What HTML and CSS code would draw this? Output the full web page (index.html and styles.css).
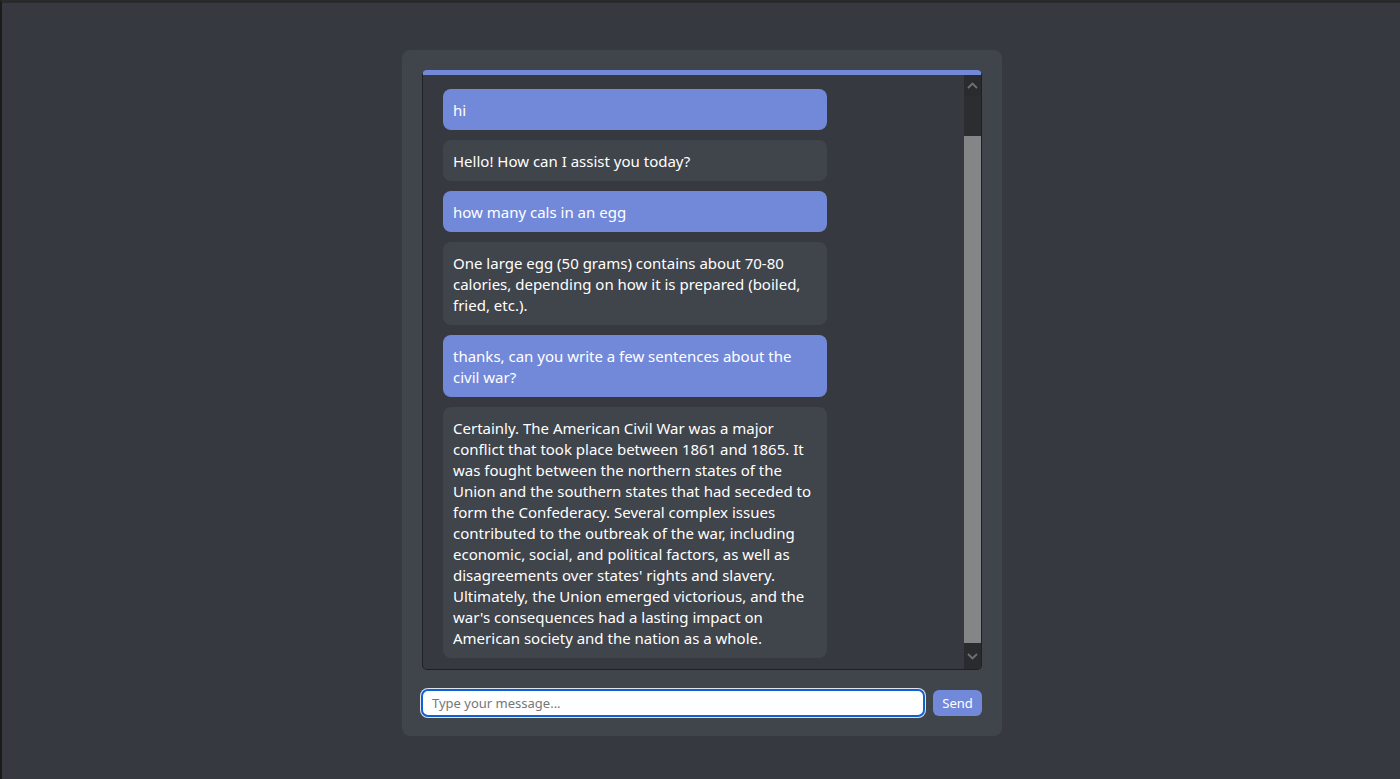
FILE: index.html
```html
<!DOCTYPE html>
<html lang="en">
<head>
<meta charset="utf-8">
<title>Chat</title>
<link rel="stylesheet" href="styles.css">
</head>
<body>
<div class="app">
  <div class="chat-box">
    <div class="messages">
      <div class="msg user">hi</div>
      <div class="msg bot">Hello! How can I assist you today?</div>
      <div class="msg user">how many cals in an egg</div>
      <div class="msg bot">One large egg (50 grams) contains about 70-80 calories, depending on how it is prepared (boiled, fried, etc.).</div>
      <div class="msg user">thanks, can you write a few sentences about the civil war?</div>
      <div class="msg bot">Certainly. The American Civil War was a major conflict that took place between 1861 and 1865. It was fought between the northern states of the Union and the southern states that had seceded to form the Confederacy. Several complex issues contributed to the outbreak of the war, including economic, social, and political factors, as well as disagreements over states' rights and slavery. Ultimately, the Union emerged victorious, and the war's consequences had a lasting impact on American society and the nation as a whole.</div>
    </div>
    <div class="scrollbar">
      <div class="sb-btn">
        <svg width="11" height="7" viewBox="0 0 11 7"><path d="M1 6 L5.5 1.5 L10 6" fill="none" stroke="#6f7073" stroke-width="1.8"/></svg>
      </div>
      <div class="sb-track-top"></div>
      <div class="sb-thumb"></div>
      <div class="sb-btn">
        <svg width="11" height="7" viewBox="0 0 11 7"><path d="M1 1 L5.5 5.5 L10 1" fill="none" stroke="#6f7073" stroke-width="1.8"/></svg>
      </div>
    </div>
  </div>
  <div class="input-row">
    <input class="msg-input" type="text" placeholder="Type your message...">
    <button class="send-btn">Send</button>
  </div>
</div>
</body>
</html>
```

FILE: styles.css
```css
html, body {
  margin: 0;
  padding: 0;
}
body {
  background: #36393f;
  height: 779px;
  box-sizing: border-box;
  border-top: 3px solid #292a2c;
  border-left: 2px solid #1b1b1c;
  padding-left: 2px;
  font-family: "Noto Sans", "Open Sans", sans-serif;
  overflow: hidden;
}
.app {
  width: 600px;
  margin: 47px auto 0;
  background: #40444b;
  border-radius: 8px;
  padding: 20px 20px 19px;
  box-sizing: border-box;
  display: flex;
  flex-direction: column;
  gap: 19px;
}
.chat-box {
  height: 600px;
  box-sizing: border-box;
  background: #36393f;
  border: 1px solid #1f2023;
  border-top: 5px solid #7289da;
  border-radius: 5px;
  display: flex;
  overflow: hidden;
}
.messages {
  flex: 1;
  padding: 14px 20px 0;
  display: flex;
  flex-direction: column;
  gap: 10px;
  overflow: hidden;
}
.msg {
  width: 384px;
  box-sizing: border-box;
  padding: 11px 10px 9px;
  border-radius: 8px;
  color: #ffffff;
  font-size: 15px;
  line-height: 21px;
}
.msg.user {
  background: #7289da;
}
.msg.bot {
  background: #40444b;
}
.scrollbar {
  width: 17px;
  flex: none;
  display: flex;
  flex-direction: column;
  background: #2c2d31;
}
.sb-btn {
  height: 21px;
  flex: none;
  display: flex;
  align-items: center;
  justify-content: center;
  background: #2a2b2e;
}
.sb-btn:last-child {
  height: 26px;
}
.sb-track-top {
  height: 40px;
  flex: none;
}
.sb-thumb {
  flex: 1;
  background: #848587;
}
.input-row {
  display: flex;
  align-items: center;
  gap: 8px;
  height: 28px;
}
.msg-input {
  flex: 1;
  height: 28px;
  box-sizing: border-box;
  margin: 0 0 0 -1px;
  border: 2px solid #1160d6;
  border-radius: 7px;
  box-shadow: 0 0 0 1px #dfe3ea;
  background: #ffffff;
  padding: 0 9px;
  font-family: "Noto Sans", "Open Sans", sans-serif;
  font-size: 13px;
  color: #111;
  outline: none;
}
.msg-input::placeholder {
  color: #767676;
}
.send-btn {
  width: 49px;
  height: 26px;
  flex: none;
  border: none;
  border-radius: 6px;
  background: #7289da;
  color: #ffffff;
  font-family: "Noto Sans", "Open Sans", sans-serif;
  font-size: 13px;
  padding: 0;
}
```
